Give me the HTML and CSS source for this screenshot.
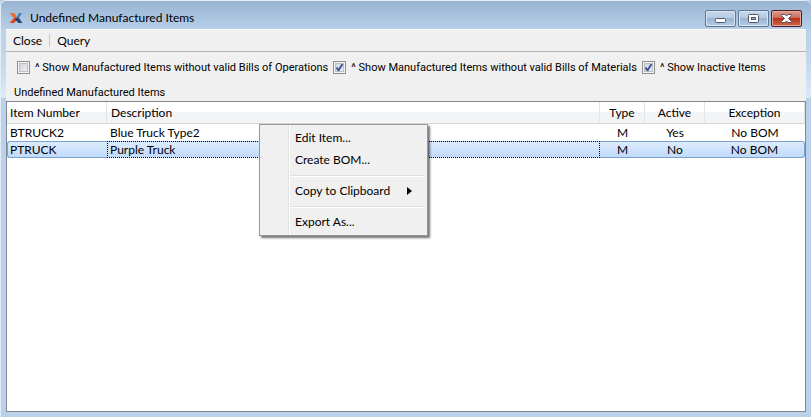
FILE: index.html
```html
<!DOCTYPE html>
<html lang="en">
<head>
<meta charset="utf-8">
<title>Undefined Manufactured Items</title>
<link rel="stylesheet" href="styles.css">
</head>
<body>
<div class="window">
  <header class="titlebar">
    <svg class="app-icon" viewBox="0 0 14 12" aria-hidden="true">
      <path d="M0.500 1h4.500l3 3.500-2.500 2.500z" fill="#ee6a2c"/>
      <path d="M8 4.500 10 1H13L9.500 6.500z" fill="#2a86c4"/>
      <path d="M5 6 8 8 5 11H0.500z" fill="#dc4520"/>
      <path d="M7 5.500 9.500 5.500 13.500 11H9.500L5.500 7z" fill="#2a4270"/>
    </svg>
    <h1 class="title">Undefined Manufactured Items</h1>
    <div class="controls">
      <button class="control" type="button" aria-label="Minimize">
        <svg viewBox="0 0 29 15"><rect x="9.500" y="7.500" width="10" height="4" rx="1" fill="#fff" stroke="#535666"/></svg>
      </button>
      <button class="control" type="button" aria-label="Maximize">
        <svg viewBox="0 0 29 15"><rect x="9.500" y="3.500" width="10" height="8" rx="1" fill="#fff" stroke="#535666"/><rect x="12.500" y="6.500" width="4" height="2" fill="#9bb6d5" stroke="#535666"/></svg>
      </button>
      <button class="control control-close" type="button" aria-label="Close">
        <svg viewBox="0 0 29 15"><path d="M9.500 3.500h3.500l1.500 1.500 1.500-1.500h3.500v1l-3 3 3 3v1h-3.500l-1.500-1.500-1.500 1.500h-3.500v-1l3-3-3-3z" fill="#fff" stroke="#535666"/></svg>
      </button>
    </div>
  </header>
  <main class="client">
    <nav class="menubar">
      <button class="menubar-item" type="button">Close</button>
      <span class="divider"></span>
      <button class="menubar-item" type="button">Query</button>
    </nav>
    <div class="options">
      <label class="option"><input type="checkbox"><span>^ Show Manufactured Items without valid Bills of Operations</span></label>
      <label class="option"><input type="checkbox" checked><span>^ Show Manufactured Items without valid Bills of Materials</span></label>
      <label class="option"><input type="checkbox" checked><span>^ Show Inactive Items</span></label>
    </div>
    <h2 class="list-label" id="list-label">Undefined Manufactured Items</h2>
    <div class="list">
      <table class="items" aria-labelledby="list-label">
        <colgroup><col class="col-number"><col><col class="col-type"><col class="col-active"><col class="col-exception"></colgroup>
        <thead>
          <tr><th>Item Number</th><th>Description</th><th class="center">Type</th><th class="center">Active</th><th class="center">Exception</th></tr>
        </thead>
        <tbody>
          <tr><td>BTRUCK2</td><td>Blue Truck Type2</td><td class="center">M</td><td class="center">Yes</td><td class="center">No BOM</td></tr>
          <tr class="selected"><td>PTRUCK</td><td class="focused">Purple Truck</td><td class="center">M</td><td class="center">No</td><td class="center">No BOM</td></tr>
        </tbody>
      </table>
      <div class="menu" role="menu">
        <button class="menu-item" type="button" role="menuitem">Edit Item...</button>
        <button class="menu-item" type="button" role="menuitem">Create BOM...</button>
        <hr class="menu-line">
        <button class="menu-item" type="button" role="menuitem">Copy to Clipboard<svg class="arrow" viewBox="0 0 5 8"><path d="M0 0v8l5-4z"/></svg></button>
        <hr class="menu-line">
        <button class="menu-item" type="button" role="menuitem">Export As...</button>
      </div>
    </div>
  </main>
</div>
</body>
</html>
```
FILE: styles.css
```css
* { box-sizing: border-box; }
body {
  margin: 0;
  background: #b9d1ea;
  color: #000;
  font: 12px/16px Lato, sans-serif;
}
button {
  margin: 0;
  padding: 0;
  border: 0;
  background: none;
  color: inherit;
  font: inherit;
}
.window {
  display: flex;
  flex-direction: column;
  min-height: 100vh;
  padding: 0 5px 5px;
  border-top: 1px solid #e4edf6;
  border-left: 1px solid #e4edf6;
  border-radius: 6px 6px 0 0;
  background: linear-gradient(#98b4d2, #b9d1ea 30px, #c3d7ee 60px, #dce9f7 96px, #b9d1ea 98px);
}
.titlebar {
  display: flex;
  align-items: center;
  height: 28px;
  padding: 6px 4px 0 3px;
}
.app-icon { width: 14px; height: 12px; }
.title {
  flex: 1;
  margin: 0 0 0 7px;
  font-size: 12px;
  font-weight: 400;
}
.controls { display: flex; gap: 2px; }
.control {
  width: 31px;
  height: 17px;
  border: 1px solid #5f7590;
  border-radius: 2px;
  background: linear-gradient(#c6d8ec, #b5cbe3 45%, #9ab4d1 50%, #b4cde8);
  box-shadow: inset 0 0 0 1px #d7e5f4;
}
.control svg { display: block; width: 29px; height: 15px; }
.control-close {
  border-color: #4d1a20;
  background: linear-gradient(#dc9b8f, #cd6a59 45%, #b5311d 50%, #cf6a45);
  box-shadow: inset 0 0 0 1px #e3a99f;
}
.client {
  display: flex;
  flex: 1;
  flex-direction: column;
  background: #f0f0f0;
}
.menubar {
  display: flex;
  align-items: center;
  height: 23px;
  padding: 0 7px;
  border-top: 1px solid #fff;
  border-bottom: 1px solid #b4b4b4;
}
.divider {
  width: 1px;
  height: 13px;
  margin: 0 7px;
  background: #c8c8c8;
}
.options {
  display: flex;
  gap: 5px;
  padding: 8px 11px;
  white-space: nowrap;
  font: 11px/15px Roboto, sans-serif;
}
.option { display: flex; align-items: center; gap: 5px; }
.option input {
  width: 13px;
  height: 13px;
  margin: 0;
  border: 1px solid #8e8f8f;
  appearance: none;
  background: linear-gradient(135deg, #cbcfd5, #f6f6f6);
  box-shadow: inset 0 0 0 1px #f4f4f4, inset 0 0 0 2px #b9bec5;
}
.option input:checked {
  background: url('data:image/svg+xml,<svg xmlns="http://www.w3.org/2000/svg" viewBox="0 0 11 11"><path d="M2.500 5.500 4.500 8.500 8.500 2" fill="none" stroke="%233c5599" stroke-width="2"/></svg>'), linear-gradient(135deg, #cbcfd5, #f6f6f6);
}
.list-label {
  margin: 2px 8px 0;
  font: 11px/16px Roboto, sans-serif;
}
.list {
  position: relative;
  flex: 1;
  border: 1px solid #828790;
  background: #fff;
}
.items {
  width: 100%;
  border-collapse: separate;
  border-spacing: 0;
  table-layout: fixed;
}
.col-number { width: 100px; }
.col-type { width: 45px; }
.col-active { width: 60px; }
.col-exception { width: 100px; }
.items th {
  height: 22px;
  padding: 2px 4px;
  border-right: 1px solid #e2e3e5;
  border-bottom: 1px solid #d5d5d5;
  background: linear-gradient(#fff 45%, #f3f4f6 50%);
  font-weight: 400;
  text-align: left;
}
.items th:first-child { padding-left: 3px; }
.items td {
  height: 17px;
  padding: 0 3px;
  border: solid transparent;
  border-width: 1px 0;
  line-height: 15px;
}
.items .center { padding: 0 2px; text-align: center; }
.selected td {
  border-color: #7da2ce;
  background: linear-gradient(#dcebfc, #c1dbfc);
}
.selected td:first-child { padding-left: 2px; border-left-width: 1px; border-radius: 3px 0 0 3px; }
.selected td:last-child { border-right-width: 1px; border-radius: 0 3px 3px 0; }
.selected .focused { padding: 0 2px; border: 1px dotted #000; }
.menu {
  position: absolute;
  top: 22px;
  left: 252px;
  display: flex;
  flex-direction: column;
  padding: 2px;
  border: 1px solid #979797;
  background: linear-gradient(90deg, transparent 28px, #e2e3e3 28px 29px, #fff 29px 30px, transparent 30px) #f0f0f0;
  box-shadow: 2px 2px 2px rgb(0 0 0 / 55%);
}
.menu-item {
  display: flex;
  align-items: center;
  justify-content: space-between;
  gap: 17px;
  height: 22px;
  padding: 0 13px 0 33px;
}
.arrow { width: 5px; height: 8px; }
.menu-line {
  width: auto;
  height: 2px;
  margin: 4px 1px 3px 28px;
  border: 0;
  border-top: 1px solid #e0e0e0;
  border-bottom: 1px solid #fff;
}
```
